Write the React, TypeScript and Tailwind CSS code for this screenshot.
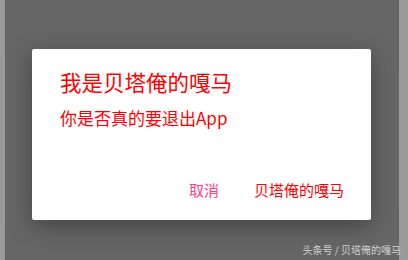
export default function App() {
  return (
    <div
      className="relative flex h-[260px] w-[408px] overflow-hidden"
      style={{ fontFamily: '"Noto Sans CJK SC", "Noto Sans", sans-serif' }}
    >
      <div className="w-[5px] bg-[#9a9a9a]" />
      <div className="flex-1 bg-[#666666] pt-[49px] pl-[27px]">
        <div className="flex h-[171px] w-[339px] flex-col rounded-[2px] bg-white pl-[28px] pr-[27px] shadow-[0_6px_24px_rgba(0,0,0,0.35)]">
          <h1 className="mt-[21px] text-[21.5px] leading-[24px] text-[#ff0000]">
            我是贝塔俺的嘎马
          </h1>
          <p className="mt-[14px] text-[17px] leading-[20px] text-[#ff0000]">
            你是否真的要退出App
          </p>
          <div className="mt-auto mb-[21px] flex items-center justify-end gap-[35px] text-[15px] leading-[18px]">
            <button type="button" className="text-[#ff4081]">
              取消
            </button>
            <button type="button" className="text-[#ff0000]">
              贝塔俺的嘎马
            </button>
          </div>
        </div>
      </div>
      <div className="w-[9px] bg-[#9a9a9a]" />
      <div className="absolute right-[7px] bottom-[5px] text-[10px] leading-[11px] whitespace-nowrap text-[#d0d0d0]">
        头条号 / 贝塔俺的嘎马
      </div>
    </div>
  );
}
